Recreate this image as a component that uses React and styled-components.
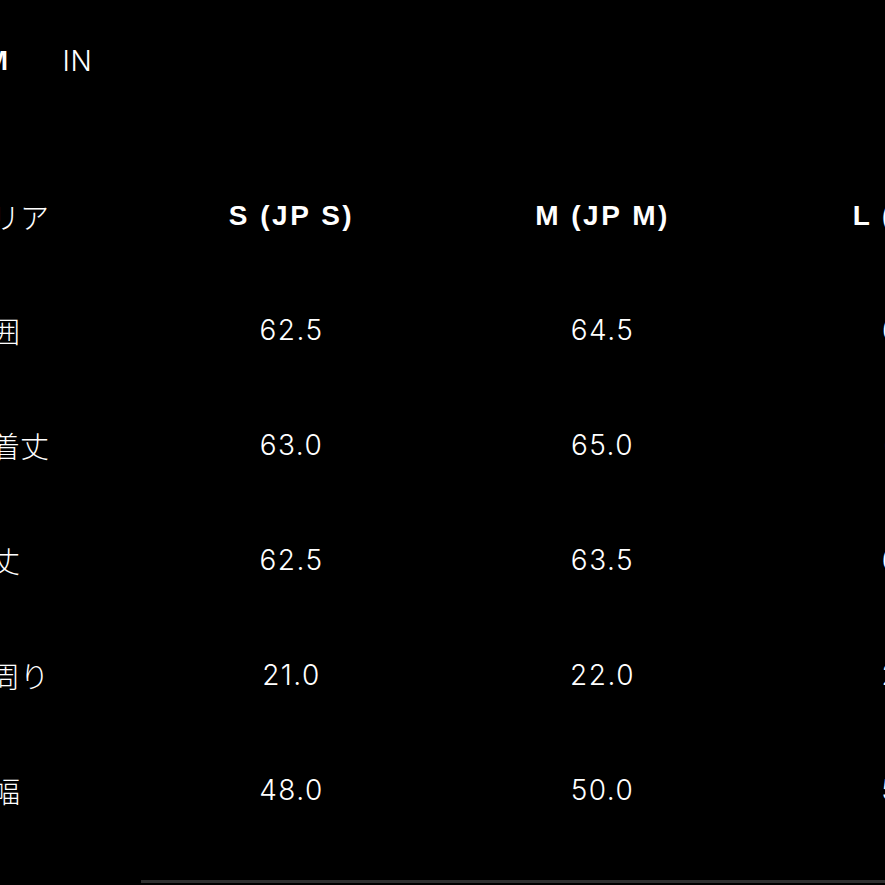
import React from "react";
import styled, { createGlobalStyle } from "styled-components";

const GlobalStyle = createGlobalStyle`
  html, body {
    margin: 0;
    padding: 0;
    background: #000;
    overflow: hidden;
  }
  body {
    width: 885px;
    height: 885px;
  }
`;

const Page = styled.div`
  width: 1110px;
  margin-left: -38px;
  color: #fff;
  font-family: "Inter", "Liberation Sans", sans-serif;
`;

const UnitToggle = styled.div`
  display: flex;
  gap: 52px;
  padding-top: 44px;
  height: 34px;
  line-height: 34px;
`;

const UnitButton = styled.span`
  font-family: ${(p) => (p.active ? '"Liberation Sans"' : '"Inter"')}, sans-serif;
  font-size: 28px;
  font-weight: ${(p) => (p.active ? 700 : 300)};
  letter-spacing: ${(p) => (p.active ? "2.5px" : "0.5px")};
  cursor: pointer;
`;

const Table = styled.div`
  margin-top: 82px;
  display: grid;
  grid-template-columns: 174px repeat(3, 311px);
`;

const Cell = styled.div`
  display: flex;
  align-items: center;
  justify-content: ${(p) => (p.label ? "flex-start" : "center")};
  height: ${(p) => (p.head ? "112px" : "115px")};
  white-space: nowrap;
`;

const HeadText = styled.span`
  font-family: "Liberation Sans", "Noto Sans CJK JP", sans-serif;
  font-size: 28px;
  font-weight: 700;
  letter-spacing: 2.5px;
`;

const LabelText = styled.span`
  font-family: "Noto Sans CJK JP", sans-serif;
  font-size: 29px;
  font-weight: 300;
`;

const ValueText = styled.span`
  font-family: "Inter", "Liberation Sans", sans-serif;
  font-size: 28px;
  font-weight: 300;
  letter-spacing: 1.5px;
`;

const Divider = styled.div`
  margin: 33px 0 0 179px;
  height: 3px;
  background: #2f2f2f;
`;

const sizes = ["S (JP S)", "M (JP M)", "L (JP L)"];

const rows = [
  { label: "胸囲", values: ["62.5", "64.5", "66.5"] },
  { label: "総着丈", values: ["63.0", "65.0", "67.0"] },
  { label: "袖丈", values: ["62.5", "63.5", "64.5"] },
  { label: "袖周り", values: ["21.0", "22.0", "23.0"] },
  { label: "肩幅", values: ["48.0", "50.0", "52.0"] },
];

const App = () => {
  return (
    <>
      <GlobalStyle />
      <Page>
        <UnitToggle>
          <UnitButton active>CM</UnitButton>
          <UnitButton>IN</UnitButton>
        </UnitToggle>

        <Table>
          <Cell head label>
            <LabelText>エリア</LabelText>
          </Cell>
          {sizes.map((size) => (
            <Cell head key={size}>
              <HeadText>{size}</HeadText>
            </Cell>
          ))}

          {rows.map((row) => (
            <React.Fragment key={row.label}>
              <Cell label>
                <LabelText>{row.label}</LabelText>
              </Cell>
              {row.values.map((value, i) => (
                <Cell key={i}>
                  <ValueText>{value}</ValueText>
                </Cell>
              ))}
            </React.Fragment>
          ))}
        </Table>

        <Divider />
      </Page>
    </>
  );
};

export default App;
